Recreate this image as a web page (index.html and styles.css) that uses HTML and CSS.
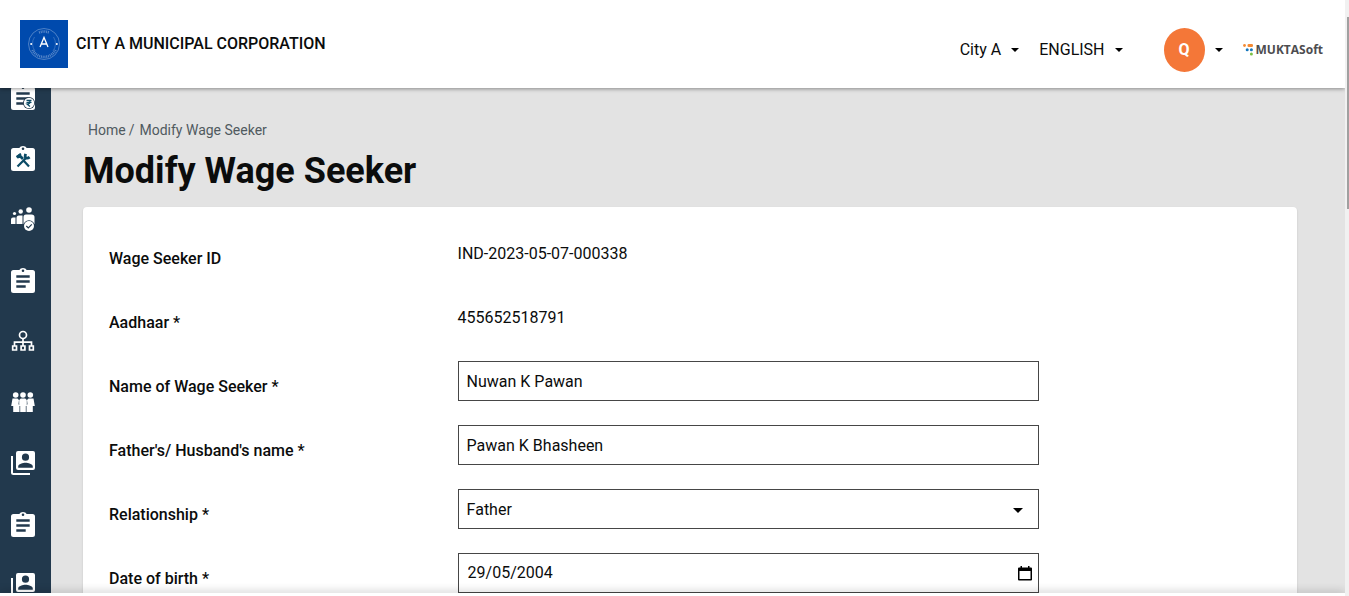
FILE: index.html
```html
<!DOCTYPE html>
<html lang="en">
<head>
<meta charset="utf-8">
<meta name="viewport" content="width=device-width, initial-scale=1">
<title>Modify Wage Seeker</title>
<link rel="stylesheet" href="styles.css">
</head>
<body>
<svg class="defs" aria-hidden="true">
  <symbol id="clipboard" viewBox="0 0 24 26">
    <path fill="#fff" fill-rule="evenodd" d="M2.500 3H8.300a4 3.300 0 0 1 7.400 0H21.500A2.500 2.500 0 0 1 24 5.500V23.500A2.500 2.500 0 0 1 21.500 26H2.500A2.500 2.500 0 0 1 0 23.500V5.500A2.500 2.500 0 0 1 2.500 3ZM12 2.500a1.300 1.300 0 1 0 0 2.600 1.300 1.300 0 0 0 0-2.600ZM5.300 8.200v2.600h13.400V8.200ZM5.300 13.200v2.600h13.400v-2.600ZM5.300 18.200v2.600h9.400v-2.600Z"/>
  </symbol>
  <symbol id="badge" viewBox="0 0 24 24">
    <path fill="none" stroke="#fff" stroke-width="2" d="M1 5V21.500Q1 23 2.500 23H19"/>
    <path fill="#fff" fill-rule="evenodd" d="M7 0H22a2 2 0 0 1 2 2V17a2 2 0 0 1-2 2H7a2 2 0 0 1-2-2V2a2 2 0 0 1 2-2ZM14.500 2.600a3.600 3.600 0 1 0 0 7.200 3.600 3.600 0 0 0 0-7.200ZM7.200 16.800H21.800V15.500C21.800 12.800 17 11.700 14.500 11.700S7.200 12.800 7.200 15.500Z"/>
  </symbol>
  <symbol id="caret" viewBox="0 0 10 5"><path d="M0 0H10L5 5Z"/></symbol>
</svg>

<div class="page">
  <div class="app">
    <header class="topbar">
      <div class="brand">
        <svg class="brand-logo" viewBox="0 0 48 48" role="img" aria-label="City A crest">
          <path fill="#004aad" d="M0 0H48V48H0Z"/>
          <g fill="none" stroke="#7fa4d6">
            <circle cx="24" cy="24" r="15.500" stroke-width=".6"/>
            <path stroke-width=".4" d="M14.500 17A12 12 0 0 0 15 31M33.500 17A12 12 0 0 1 33 31"/>
            <path stroke-width="2.600" stroke-dasharray="1 .8" opacity=".7" d="M19 12.500Q24 10.500 29 12.500M12.500 30A13 13 0 0 0 35.500 30"/>
          </g>
          <circle cx="11.200" cy="24" r="1" fill="#fff"/><circle cx="36.800" cy="24" r="1" fill="#fff"/>
          <path fill="none" stroke="#fff" stroke-width="1.300" d="M20 27L24 17.500L28 27M21.300 24H26.700"/>
        </svg>
        <span class="brand-name">CITY A MUNICIPAL CORPORATION</span>
      </div>
      <div class="tools">
        <button class="menu city" type="button">City A <svg class="caret"><use href="#caret"/></svg></button>
        <button class="menu language" type="button">ENGLISH <svg class="caret"><use href="#caret"/></svg></button>
        <button class="menu profile" type="button" aria-label="Profile"><span class="avatar">Q</span><svg class="caret"><use href="#caret"/></svg></button>
        <div class="product">
          <svg class="product-mark" viewBox="0 0 10 12" aria-hidden="true">
            <g fill="#f58a33"><circle cx="1.500" cy="1.500" r="1.400"/><rect x="4.500" y="0" width="5.500" height="3" rx="1.300"/></g>
            <g fill="#1577bd"><circle cx="4.200" cy="5.800" r="1.500"/><circle cx="8.400" cy="5.800" r="1.500"/></g>
            <circle cx="8.400" cy="10" r="1.500" fill="#7ac143"/>
          </svg>
          <span>MUKTASoft</span>
        </div>
      </div>
    </header>

    <div class="body">
      <nav class="sidebar" aria-label="Modules">
        <ul class="side-list">
          <li><a href="#" aria-label="Estimates"><svg class="icon tall" viewBox="0 0 24 26">
            <use href="#clipboard"/>
            <circle cx="18" cy="19" r="6" fill="#22394d"/><circle cx="18" cy="19" r="5.200" fill="#fff"/>
            <path fill="none" stroke="#0b4b66" stroke-width="1.200" d="M15.500 16.300H20.500M15.500 18.300H20.500M16.500 16.300C20 16.300 20 20 16 20L19 22.500"/></svg></a></li>
          <li><a href="#" aria-label="Works"><svg class="icon tall" viewBox="0 0 24 26">
            <path fill="#fff" fill-rule="evenodd" d="M2.500 3H8.300a4 3.300 0 0 1 7.400 0H21.500A2.500 2.500 0 0 1 24 5.500V23.500A2.500 2.500 0 0 1 21.500 26H2.500A2.500 2.500 0 0 1 0 23.500V5.500A2.500 2.500 0 0 1 2.500 3ZM12 2.500a1.300 1.300 0 1 0 0 2.600 1.300 1.300 0 0 0 0-2.600Z"/>
            <g fill="none" stroke="#0b4b66"><path stroke-width="2.200" d="M6.500 21.500L15.500 12.500M12.500 15.500L18 21.500"/><path stroke-width="2.800" d="M6 12.800L8.500 10.500L12 14M14.600 8.800Q13.500 12.500 15.200 13T18.600 12.200"/><path stroke-width="1.800" d="M5.500 11.800L10 8.700"/></g></svg></a></li>
          <li><a href="#" aria-label="Masters"><svg class="icon" viewBox="0 0 24 24">
            <g fill="#fff"><circle cx="3.500" cy="6.500" r="1.600"/><circle cx="9.700" cy="4.500" r="2.200"/><circle cx="18" cy="3" r="2.800"/>
            <path d="M0 17V12.500Q0 10.500 2 10.500H4.500V17ZM5.500 17V11Q5.500 8.500 8 8.500H11.500V17ZM12.500 17V10Q12.500 7.500 15 7.500H20.500Q23.500 7.500 23.500 10V17Z"/></g>
            <circle cx="18" cy="19" r="5.800" fill="#22394d"/><circle cx="18" cy="19" r="5" fill="#fff"/><path fill="none" stroke="#22394d" stroke-width="1.200" d="M15.300 19L17.300 21L20.800 17.300"/></svg></a></li>
          <li><a href="#" aria-label="Projects"><svg class="icon tall"><use href="#clipboard"/></svg></a></li>
          <li><a href="#" aria-label="Organizations"><svg class="icon" viewBox="0 0 24 24">
            <g fill="none" stroke="#fff" stroke-width="1.700"><circle cx="12" cy="6" r="3.500"/><path d="M12 9.500V17M3.500 17V13.200H20.500V17"/><path d="M1.700 17H5.500V21H1.700ZM10.100 17H13.900V21H10.100ZM18.500 17H22.300V21H18.500Z"/></g></svg></a></li>
          <li><a href="#" aria-label="Wage seekers"><svg class="icon" viewBox="0 0 24 24">
            <g fill="#fff"><circle cx="4.700" cy="5" r="2.800"/><circle cx="12" cy="5" r="2.800"/><circle cx="19.300" cy="5" r="2.800"/>
            <path d="M1.500 8.500H6.500L8 10L7.500 14L8.500 16V22H2.200V16H.2ZM9.800 8.500H14.200L15.800 10V16H14.800V22H9.200V16H8.200V10ZM17.500 8.500H22.500L23.800 16H21.800V22H15.500V16L16.500 14L16 10Z"/></g></svg></a></li>
          <li><a href="#" aria-label="Contacts"><svg class="icon"><use href="#badge"/></svg></a></li>
          <li><a href="#" aria-label="Muster rolls"><svg class="icon tall"><use href="#clipboard"/></svg></a></li>
          <li><a href="#" aria-label="Directory"><svg class="icon"><use href="#badge"/></svg></a></li>
        </ul>
      </nav>

      <main class="content">
        <nav class="crumbs" aria-label="Breadcrumb"><a href="#">Home</a><span>/</span><a class="current" href="#">Modify Wage Seeker</a></nav>
        <h1>Modify Wage Seeker</h1>
        <form class="card">
          <div class="row"><span class="label">Wage Seeker ID</span><span class="value">IND-2023-05-07-000338</span></div>
          <div class="row"><span class="label">Aadhaar *</span><span class="value">455652518791</span></div>
          <div class="row"><label class="label" for="name">Name of Wage Seeker *</label><input class="control" id="name" type="text" value="Nuwan K Pawan"></div>
          <div class="row"><label class="label" for="father">Father's/ Husband's name *</label><input class="control" id="father" type="text" value="Pawan K Bhasheen"></div>
          <div class="row"><label class="label" for="relation">Relationship *</label>
            <div class="field"><select class="control" id="relation"><option>Father</option><option>Husband</option></select><svg class="caret select-caret"><use href="#caret"/></svg></div></div>
          <div class="row"><label class="label" for="dob">Date of birth *</label>
            <div class="control date"><input id="dob" type="text" value="29/05/2004"><button type="button" aria-label="Open calendar"><svg viewBox="0 0 14 15"><path fill-rule="evenodd" d="M1 1.500H2.500V0H4V1.500H10V0H11.500V1.500H13Q14 1.500 14 2.500V13.500Q14 14.500 13 14.500H1Q0 14.500 0 13.500V2.500Q0 1.500 1 1.500ZM1.500 5V13H12.500V5Z"/></svg></button></div></div>
        </form>
      </main>
    </div>
    <footer class="actionbar"></footer>
  </div>
  <div class="scroll-track"><div class="scroll-thumb"></div></div>
</div>
</body>
</html>
```
FILE: styles.css
```css
* { box-sizing: border-box; }

body {
  margin: 0;
  font: 16px/20px Roboto, "Liberation Sans", sans-serif;
  color: #0b0c0c;
  background: #e3e3e3;
}

button, input, select { font: inherit; color: inherit; }

button {
  padding: 0;
  border: 0;
  background: none;
  cursor: pointer;
}

a { color: inherit; text-decoration: none; }

.defs { display: none; }

.page { display: flex; height: 100vh; }

.app {
  display: flex;
  flex: 1;
  flex-direction: column;
  min-width: 0;
  overflow: hidden;
}

/* Top bar */
.topbar {
  z-index: 2;
  display: flex;
  flex: none;
  align-items: center;
  justify-content: space-between;
  height: 88px;
  padding: 0 22px 0 20px;
  background: #fff;
  box-shadow: 0 1px 4px rgba(0, 0, 0, .4);
}

.brand { display: flex; align-items: center; gap: 8px; }
.brand-logo { width: 48px; height: 48px; }
.brand-name { font-weight: 500; }

.tools { display: flex; align-items: center; padding-top: 12px; }
.menu { display: flex; align-items: center; gap: 10px; }
.city { margin-right: 20px; }
.language { margin-right: 41px; }
.profile { margin-right: 20px; }
.caret { width: 8px; height: 4px; }

.avatar {
  display: grid;
  place-items: center;
  width: 41px;
  height: 44px;
  border-radius: 50%;
  background: #f47738;
  color: #fff;
  font-weight: 700;
}

.product {
  display: flex;
  align-items: center;
  gap: 3px;
  color: #4d4d4f;
  font: bold 12px/16px "Open Sans", sans-serif;
}
.product-mark { width: 10px; height: 12px; }

/* Body */
.body { display: flex; flex: 1; min-height: 0; overflow: hidden; }

.sidebar {
  flex: none;
  width: 51px;
  overflow: hidden;
  background: #22394d;
}
/* The module list is scrolled part of one item up */
.side-list { margin: -22px 0 0; padding: 0; list-style: none; }
.side-list a {
  display: flex;
  align-items: center;
  height: 61px;
  padding-left: 11px;
}
.icon { width: 24px; height: 24px; }
.icon.tall { height: 26px; }

.content { flex: 1; min-width: 0; padding: 32px 48px 0 32px; }

.crumbs {
  display: flex;
  gap: 3px;
  padding-left: 5px;
  color: #505a5f;
  font-size: 14px;
}
.crumbs .current { padding-left: 2px; }

h1 {
  margin: 9px 0 13px;
  font-size: 36px;
  line-height: 45px;
  font-weight: 700;
}

.card {
  padding: 26px;
  border-radius: 4px;
  background: #fff;
  box-shadow: 0 1px 2px rgba(0, 0, 0, .16);
}

.row { display: flex; margin-bottom: 24px; height: 40px; }
.label { width: 30%; padding-top: 16px; font-weight: 500; }
.value { padding-top: 11px; }
.field { position: relative; width: 50%; }
.control {
  width: 50%;
  height: 40px;
  padding: 0 8px;
  border: 1px solid #464646;
  border-radius: 0;
  background: #fff;
}
.field .control { width: 100%; padding-top: 2px; appearance: none; }
.select-caret {
  position: absolute;
  top: 19px;
  right: 16px;
  width: 10px;
  height: 5px;
  pointer-events: none;
}
.date { display: flex; align-items: center; padding: 0 6px 0 9px; }
.date input {
  flex: 1;
  min-width: 0;
  padding: 0;
  border: 0;
  outline: 0;
}
.date svg { display: block; width: 14px; height: 15px; }

/* Bottom bar and scrollbar */
.actionbar {
  z-index: 2;
  flex: none;
  height: 3px;
  background: #fff;
  box-shadow: 0 0 10px rgba(0, 0, 0, .4);
}
.scroll-track { flex: none; width: 4px; padding: 17px 0 0 2px; background: #f1f1f1; }
.scroll-thumb { height: 192px; background: #a0a0a0; }
```
